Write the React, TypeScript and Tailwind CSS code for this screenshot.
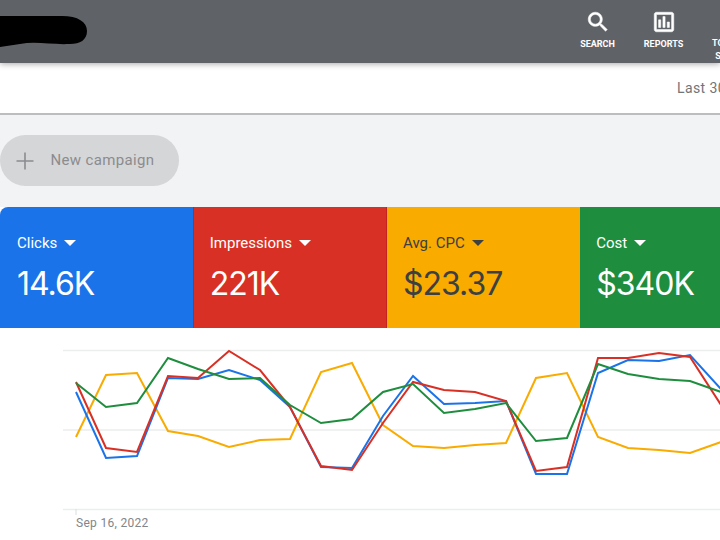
import React from 'react';

const xs = [76, 106, 137, 168, 198, 229, 260, 290, 321, 352, 383, 413, 444, 475, 506, 536, 567, 598, 628, 659, 690, 721];

const series = [
    { color: '#f9ab00', ys: [437, 375, 373, 431, 436, 447, 440, 439, 372, 363, 425, 446, 448, 445, 443, 378, 373, 437, 448, 450, 453, 442] },
    { color: '#1a73e8', ys: [392, 458, 456, 378, 379, 370, 380, 407, 467, 468, 416, 376, 404, 403, 401, 474, 474, 373, 360, 361, 355, 389] },
    { color: '#d93025', ys: [382, 448, 452, 376, 378, 351, 370, 407, 466, 470, 423, 382, 390, 392, 401, 471, 467, 358, 358, 353, 357, 405] },
    { color: '#1e8e3e', ys: [383, 407, 403, 358, 369, 379, 378, 405, 423, 419, 392, 384, 413, 409, 403, 441, 438, 364, 374, 379, 381, 392] },
];

const cards = [
    { label: 'Clicks', value: '14.6K', bg: 'bg-[#1a73e8] text-white rounded-tl-lg pl-[17px]' },
    { label: 'Impressions', value: '221K', bg: 'bg-[#d93025] text-white border-x border-[#c5221f] pl-[15.5px]' },
    { label: 'Avg. CPC', value: '$23.37', bg: 'bg-[#f9ab00] text-[#3c4043] pl-[16.5px]' },
    { label: 'Cost', value: '$340K', bg: 'bg-[#1e8e3e] text-white pl-[16.5px]' },
];

const NavItem: React.FC<{ label: React.ReactNode; width: string; path: string }> = ({ label, width, path }) => (
    <div className={`flex flex-col items-center shrink-0 pt-[9px] ${width}`}>
        <svg width="26" height="26" viewBox="0 0 24 24" fill="white" stroke="white" strokeWidth="0.5">
            <path d={path} />
        </svg>
        <span className="mt-[3px] text-[9px] leading-[13px] font-bold text-white text-center whitespace-nowrap">{label}</span>
    </div>
);

export default function App() {
    return (
        <div className="w-[720px] h-[540px] overflow-hidden bg-white font-['Roboto',sans-serif]">
            {/* Top bar */}
            <header className="relative z-20 h-[63px] bg-[#5f6368] flex shadow-[0_1px_6px_rgba(0,0,0,0.35)]">
                <div className="w-[564.5px] shrink-0 pt-[16px]">
                    <svg width="88" height="32" viewBox="0 0 88 32">
                        <path d="M0 0 L62 0 C78 0 87 6 87 15 C87 24 80 28 70 28 C52 29 36 25 20 28 L0 31 Z" fill="black" />
                    </svg>
                </div>
                <NavItem
                    width="w-[66px]"
                    label="SEARCH"
                    path="M15.5 14h-.79l-.28-.27C15.41 12.59 16 11.11 16 9.5 16 5.91 13.09 3 9.5 3S3 5.91 3 9.5 5.91 16 9.5 16c1.61 0 3.09-.59 4.23-1.57l.27.28v.79l5 4.99L20.49 19l-4.99-5zm-6 0C7.01 14 5 11.99 5 9.5S7.01 5 9.5 5 14 7.01 14 9.5 11.99 14 9.5 14z"
                />
                <NavItem
                    width="w-[66px]"
                    label="REPORTS"
                    path="M19 3H5c-1.1 0-2 .9-2 2v14c0 1.1.9 2 2 2h14c1.1 0 2-.9 2-2V5c0-1.1-.9-2-2-2zm0 16H5V5h14v14zM7 10h2v7H7zM11 7h2v10h-2zM15 12h2v5h-2z"
                />
                <NavItem
                    width="w-[80px]"
                    label={<>TOOLS AND<br />SETTINGS</>}
                    path="M22.7 19l-9.1-9.1c.9-2.3.4-5-1.5-6.9-2-2-5-2.4-7.4-1.3L9 6 6 9 1.6 4.7C.4 7.1.9 10.1 2.9 12.1c1.9 1.9 4.6 2.4 6.9 1.5l9.1 9.1c.4.4 1 .4 1.4 0l2.3-2.3c.5-.4.5-1.1.1-1.4z"
                />
            </header>

            {/* Date range bar */}
            <div className="relative z-10 h-[52px] bg-white border-b-2 border-[#bcbdbe] pl-[677px] pt-[16px] text-[14px] leading-[18px] tracking-[0.4px] text-[#70757a] whitespace-nowrap">
                Last 30 days
            </div>

            {/* Action row */}
            <div className="h-[92px] bg-[#f1f3f4] pt-[20px]">
                <div className="w-[179px] h-[51px] rounded-full bg-[#d5d6d8] flex items-center pl-[16px] gap-[16.5px] text-[#8b8c8e]">
                    <svg width="18" height="18" viewBox="0 0 18 18" stroke="currentColor" strokeWidth="1.6" fill="none">
                        <path d="M9 0.5V17.5M0.5 9H17.5" />
                    </svg>
                    <span className="text-[15px] tracking-[0.35px]">New campaign</span>
                </div>
            </div>

            {/* Metric cards */}
            <div className="grid grid-cols-4 w-[773px] h-[121px]">
                {cards.map((c) => (
                    <div key={c.label} className={`pt-[26px] ${c.bg}`}>
                        <div className="flex items-center gap-[7px] text-[15px] leading-[20px]">
                            {c.label}
                            <span className="w-0 h-0 border-x-[6px] border-x-transparent border-t-[6px] border-t-current" />
                        </div>
                        <div className="mt-[11px] font-['Inter',sans-serif] text-[32px] leading-[40px] tracking-[-1px]">{c.value}</div>
                    </div>
                ))}
            </div>

            {/* Chart */}
            <svg width="720" height="188" viewBox="0 328 720 188" className="block">
                <path d="M63 350.5H720M63 430H720M63 509.5H720" stroke="#eceded" strokeWidth="1.5" fill="none" />
                <path d="M76 509V515" stroke="#dadce0" strokeWidth="1" fill="none" />
                {series.map((s) => (
                    <polyline
                        key={s.color}
                        points={s.ys.map((y, i) => `${xs[i]},${y}`).join(' ')}
                        fill="none"
                        stroke={s.color}
                        strokeWidth="2"
                    />
                ))}
            </svg>
            <div className="pl-[76px] text-[12px] leading-[14px] tracking-[0.3px] text-[#80868b]">Sep 16, 2022</div>
        </div>
    );
}
